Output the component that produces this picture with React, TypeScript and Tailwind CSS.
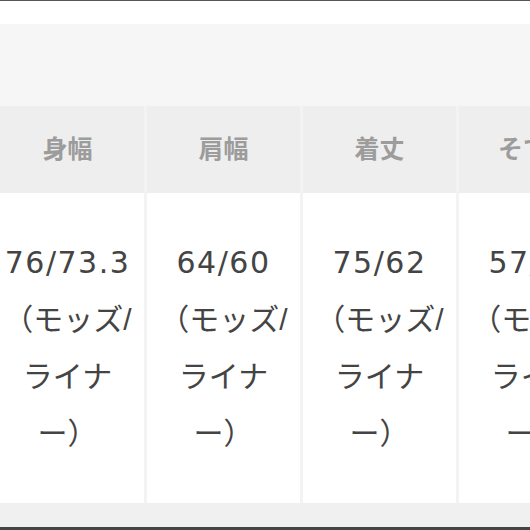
const columns = [
  { label: "身幅", lines: ["76/73.3", "（モッズ/", "ライナ", "ー）"] },
  { label: "肩幅", lines: ["64/60", "（モッズ/", "ライナ", "ー）"] },
  { label: "着丈", lines: ["75/62", "（モッズ/", "ライナ", "ー）"] },
  { label: "そで丈", lines: ["57/52", "（モッズ/", "ライナ", "ー）"] },
];

export default function App() {
  return (
    <div
      className="w-[530px] h-[530px] overflow-hidden bg-[#f3f3f3] flex flex-col"
      style={{ fontFamily: '"Liberation Sans", "Noto Sans CJK JP", sans-serif' }}
    >
      <div className="h-px bg-[#555555] shrink-0" />
      <div className="h-[23px] bg-white shrink-0" />
      <div className="h-[82px] bg-[#f6f6f6] shrink-0" />
      <div className="flex gap-[3px] -ml-[9px] shrink-0">
        {columns.map((col) => (
          <div key={col.label} className="w-[153px] shrink-0 flex flex-col">
            <div className="h-[87px] bg-[#eeeeee] flex items-center justify-center overflow-hidden">
              <span className="text-[25px] font-semibold text-[#9c9c9c] whitespace-nowrap">
                {col.label}
              </span>
            </div>
            <div className="h-[310px] bg-white flex flex-col items-center justify-center overflow-hidden">
              {col.lines.map((line, i) => (
                <span
                  key={i}
                  className={
                    i === 0
                      ? "block text-[30px] leading-[57px] tracking-[1.5px] text-[#444444] whitespace-nowrap font-['DejaVu_Sans',sans-serif]"
                      : "block text-[30px] leading-[57px] text-[#444444] whitespace-nowrap"
                  }
                >
                  {line}
                </span>
              ))}
            </div>
          </div>
        ))}
      </div>
      <div className="flex-1 bg-[#f0f0f0]" />
      <div className="h-[3px] bg-[#444444] shrink-0" />
    </div>
  );
}
